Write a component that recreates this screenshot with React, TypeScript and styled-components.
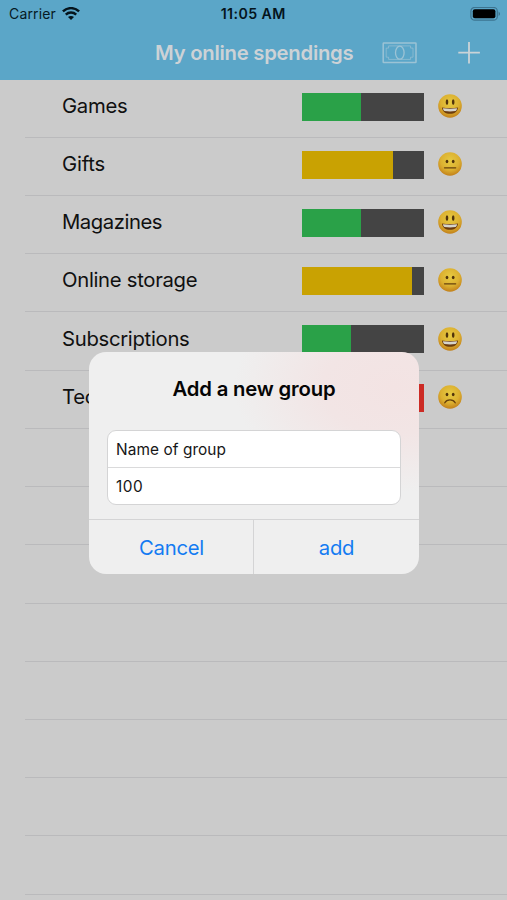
import React from "react";
import styled, { createGlobalStyle } from "styled-components";

const GlobalStyle = createGlobalStyle`
  * { box-sizing: border-box; }
  body {
    margin: 0;
    background: #cbcbcb;
    font-family: Inter, "Liberation Sans", sans-serif;
    color: #101010;
  }
  button { font: inherit; border: 0; background: none; padding: 0; }
`;

const Screen = styled.div`
  position: relative;
  width: 507px;
  height: 900px;
  overflow: hidden;
  background: #cbcbcb;
`;

const Header = styled.header`
  height: 79.6px;
  background: #5ba6c8;
`;

const StatusBar = styled.div`
  height: 27px;
  display: grid;
  grid-template-columns: 1fr auto 1fr;
  align-items: center;
  padding: 0 6px 0 9px;
  font-size: 14px;
  line-height: 27px;
  color: #061a24;
`;

const Carrier = styled.div`
  display: flex;
  align-items: center;
  gap: 6px;
  letter-spacing: 0.15px;
`;

const Clock = styled.div`
  margin-right: 3.5px;
  font-size: 14.2px;
  font-weight: 600;
  letter-spacing: 0.42px;
  color: #04141c;
`;

const BatterySlot = styled.div`
  display: flex;
  justify-content: flex-end;
`;

const NavBar = styled.div`
  height: 51px;
  display: flex;
  align-items: center;
  padding-left: 155px;
`;

const Title = styled.h1`
  margin: 0;
  width: 227px;
  font-size: 20.3px;
  font-weight: 600;
  line-height: 26px;
  letter-spacing: -0.25px;
  white-space: nowrap;
  color: #cdd2d6;
`;

const NavButton = styled.button<{ $gap?: number }>`
  display: flex;
  margin-left: ${(p) => p.$gap ?? 0}px;
`;

const List = styled.ul`
  margin: 0;
  padding: 0;
  list-style: none;
`;

const Row = styled.li`
  height: 58.23px;
  margin-left: 25px;
  padding: 0 45px 3.4px 37px;
  display: flex;
  align-items: center;
  border-bottom: 1px solid #bababc;
`;

const Label = styled.span<{ $spacing: number }>`
  width: 239.7px;
  padding-bottom: 1.4px;
  font-size: 20.3px;
  line-height: 26px;
  letter-spacing: ${(p) => p.$spacing}px;
`;

const Track = styled.div`
  width: 122px;
  height: 28px;
  background: #444;
`;

const Fill = styled.div<{ $color: string }>`
  height: 100%;
  background: ${(p) => p.$color};
`;

const FaceIcon = styled.svg`
  display: block;
  width: 24px;
  height: 24px;
  margin: -1.6px 0 0 14px;
`;

const Dialog = styled.section`
  position: absolute;
  left: 89px;
  top: 352px;
  width: 330px;
  height: 222px;
  border-radius: 17px;
  overflow: hidden;
  display: flex;
  flex-direction: column;
  background:
    radial-gradient(ellipse 160px 105px at 305px 35px, #f3e3e3 0%, #f2e5e5 45%, rgba(239, 239, 239, 0) 100%),
    #efefef;
`;

const DialogTitle = styled.h2`
  margin: 24px 0 28px;
  font-size: 20.3px;
  font-weight: 600;
  line-height: 26px;
  letter-spacing: -0.18px;
  text-align: center;
  color: #050505;
`;

const Fields = styled.div`
  margin: 0 18px;
  height: 75px;
  border: 1px solid #d4d4d5;
  border-radius: 9px;
  background: #fff;
  overflow: hidden;
`;

const Field = styled.div`
  height: 36px;
  padding-left: 8px;
  font-size: 15.4px;
  line-height: 37px;
  letter-spacing: 0.08px;
  color: #161616;

  & + & {
    height: 38px;
    border-top: 1px solid #dadadb;
    letter-spacing: 0.5px;
  }
`;

const Actions = styled.div`
  margin-top: 14px;
  height: 55px;
  display: grid;
  grid-template-columns: 1fr 1fr;
  border-top: 1px solid #d4d4d5;
`;

const Action = styled.button`
  font-size: 20.3px;
  letter-spacing: -0.25px;
  color: #137bf2;

  & + & { border-left: 1px solid #d4d4d5; margin-left: -1px; }
`;

type Mood = "happy" | "neutral" | "sad";

function Face({ mood }: { mood: Mood }) {
  const happy = mood === "happy";
  return (
    <FaceIcon viewBox="0 0 24 24">
      <defs>
        <radialGradient id="skin" cx="50%" cy="36%" r="66%">
          <stop offset="0" stopColor="#e6ca42" />
          <stop offset="0.6" stopColor="#dcb030" />
          <stop offset="1" stopColor="#c07c18" />
        </radialGradient>
      </defs>
      <circle cx="12" cy="12" r="11.8" fill="url(#skin)" />
      <ellipse cx="9" cy={happy ? 8.1 : 9.5} rx={happy ? 1.3 : 1.35} ry={happy ? 2.9 : 1.8} fill="#51330b" />
      <ellipse cx="15.2" cy={happy ? 8.1 : 9.5} rx={happy ? 1.3 : 1.35} ry={happy ? 2.9 : 1.8} fill="#51330b" />
      {happy && (
        <>
          <path d="M3.9 13.4Q12 14.6 20.1 13.4C19.6 17.6 16.5 19.7 12 19.7S4.4 17.6 3.9 13.4Z" fill="#6b3b0e" />
          <path d="M4.9 14.2Q12 15.1 19.1 14.2Q18.9 16.4 17.6 17.1Q12 17.8 6.4 17.1Q5.1 16.4 4.9 14.2Z" fill="#d6d4cb" />
        </>
      )}
      {mood === "neutral" && <path d="M6.5 15.8H17.7" stroke="#67410c" strokeWidth="1.3" strokeLinecap="round" />}
      {mood === "sad" && (
        <path d="M6.8 17.8C8.8 13.9 15.2 13.9 17.2 17.8" fill="none" stroke="#67410c" strokeWidth="1.3" strokeLinecap="round" />
      )}
    </FaceIcon>
  );
}

const GREEN = "#2aa148";
const YELLOW = "#c9a202";
const RED = "#cc2b25";

const groups: { name: string; spent: number; color: string; mood: Mood; spacing: number }[] = [
  { name: "Games", spent: 49, color: GREEN, mood: "happy", spacing: -0.3 },
  { name: "Gifts", spent: 75, color: YELLOW, mood: "neutral", spacing: -0.2 },
  { name: "Magazines", spent: 49, color: GREEN, mood: "happy", spacing: -0.45 },
  { name: "Online storage", spent: 90.2, color: YELLOW, mood: "neutral", spacing: -0.3 },
  { name: "Subscriptions", spent: 40.2, color: GREEN, mood: "happy", spacing: -0.3 },
  { name: "Technology", spent: 100, color: RED, mood: "sad", spacing: -0.3 },
];

const emptyRows = Array.from({ length: 9 }, (_, i) => i);

export default function App() {
  return (
    <>
      <GlobalStyle />
      <Screen>
        <Header>
          <StatusBar>
            <Carrier>
              <span>Carrier</span>
              <svg width="18" height="14" viewBox="0 0 18 14" fill="none" stroke="#05141c" strokeWidth="2.4">
                <path d="M0.9 4.4C5.4 0 12.6 0 17.1 4.4" />
                <path d="M3.8 7.6C6.7 4.8 11.3 4.8 14.2 7.6" />
                <path d="M9 13.1L6 10.1C7.6 8.6 10.4 8.6 12 10.1Z" fill="#05141c" stroke="none" />
              </svg>
            </Carrier>
            <Clock>11:05 AM</Clock>
            <BatterySlot>
              <svg width="31" height="14" viewBox="0 0 31 14">
                <rect x="0.9" y="0.4" width="26.4" height="12.8" rx="3.8" fill="none" stroke="#3d7490" strokeWidth="1.2" />
                <rect x="2.8" y="2.3" width="22.6" height="9" rx="2" fill="#000" />
                <path d="M28.7 4.5Q31 6.8 28.7 9.1Z" fill="#36667d" />
              </svg>
            </BatterySlot>
          </StatusBar>
          <NavBar>
            <Title>My online spendings</Title>
            <NavButton aria-label="Money">
              <svg width="35" height="22" viewBox="0 0 35 22" fill="none" stroke="#9cc3d5">
                <rect x="1.2" y="0.9" width="32.8" height="19.6" rx="0.5" strokeWidth="1.5" />
                <path d="M6.6 3.9H28.6V6.1H31V15.2H28.6V17.4H6.6V15.2H4.2V6.1H6.6Z" strokeWidth="0.9" strokeOpacity="0.75" />
                <ellipse cx="17.8" cy="10.7" rx="4.3" ry="6.5" fill="#5ba6c8" strokeWidth="1.3" />
              </svg>
            </NavButton>
            <NavButton aria-label="Add" $gap={41}>
              <svg width="22" height="22" viewBox="0 0 22 22" stroke="#cbd3d7" strokeWidth="1.8">
                <path d="M11 0V21.4M0.3 10.6H21.9" />
              </svg>
            </NavButton>
          </NavBar>
        </Header>

        <List>
          {groups.map((g) => (
            <Row key={g.name}>
              <Label $spacing={g.spacing}>{g.name}</Label>
              <Track>
                <Fill $color={g.color} style={{ width: `${g.spent}%` }} />
              </Track>
              <Face mood={g.mood} />
            </Row>
          ))}
          {emptyRows.map((i) => (
            <Row key={i} />
          ))}
        </List>

        <Dialog role="dialog" aria-label="Add a new group">
          <DialogTitle>Add a new group</DialogTitle>
          <Fields>
            <Field>Name of group</Field>
            <Field>100</Field>
          </Fields>
          <Actions>
            <Action>Cancel</Action>
            <Action>add</Action>
          </Actions>
        </Dialog>
      </Screen>
    </>
  );
}
